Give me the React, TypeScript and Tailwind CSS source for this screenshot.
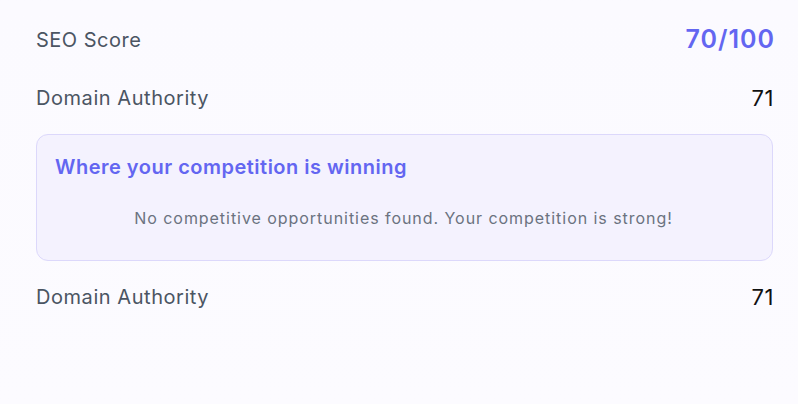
export default function App() {
    return (
        <div
            className="min-h-screen w-full bg-gradient-to-b from-[#fbfaff] to-[#fcfbff] pl-9 pr-[25px] pt-[26px]"
            style={{ fontFamily: 'Inter, "Noto Sans", sans-serif' }}
        >
            <div className="flex h-7 items-center justify-between">
                <span className="text-xl tracking-[0.5px] text-[#4b5563]">SEO Score</span>
                <span className="-mr-[2px] text-[25px] font-semibold tracking-[1px] text-[#6366f1]">70/100</span>
            </div>

            <div className="mt-[30px] flex h-7 items-center justify-between">
                <span className="text-xl tracking-[0.55px] text-[#4b5563]">Domain Authority</span>
                <span className="-mr-[1px] text-[22px] tracking-[0.5px] text-[#111111]">71</span>
            </div>

            <div className="mt-[22px] h-[127px] rounded-xl border border-[#dcd8fb] bg-[#f4f2fe] pl-[18px] pr-5 pt-5">
                <h3 className="text-xl font-semibold leading-6 tracking-[0.5px] text-[#6366f1]">
                    Where your competition is winning
                </h3>
                <p className="mt-[27px] text-center text-base leading-6 tracking-[0.95px] text-[#6b7280]">
                    No competitive opportunities found. Your competition is strong!
                </p>
            </div>

            <div className="mt-[22px] flex h-7 items-center justify-between">
                <span className="text-xl tracking-[0.55px] text-[#4b5563]">Domain Authority</span>
                <span className="-mr-[1px] text-[22px] tracking-[0.5px] text-[#111111]">71</span>
            </div>
        </div>
    );
}
